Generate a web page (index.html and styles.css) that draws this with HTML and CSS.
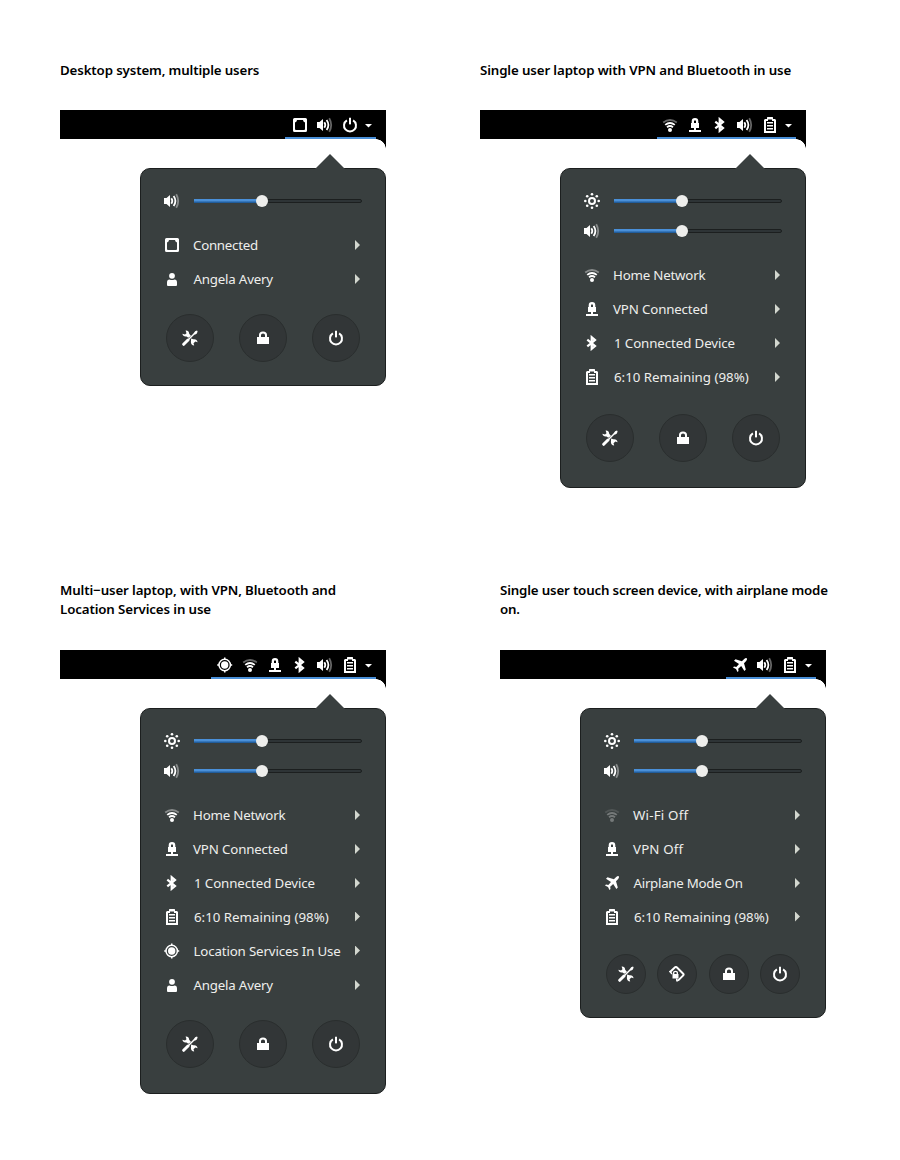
FILE: index.html
```
<!DOCTYPE html>
<html lang="en">
<head>
<meta charset="utf-8">
<title>System status menu</title>
<link rel="stylesheet" href="styles.css">
</head>
<body>
<svg class="sprite" aria-hidden="true">
  <symbol id="wired" viewBox="0 0 16 16"><path fill-rule="evenodd" d="M2.500 1h11Q15 1 15 2.500v11Q15 15 13.500 15h-11Q1 15 1 13.500v-11Q1 1 2.500 1zM3 5.500v7l1 .5h8l1-.5v-7l-1.500-1L11 3H5L4.500 4.500z"/></symbol>
  <symbol id="volume" viewBox="0 0 16 16"><path d="M0 5h2.500L6 2v12l-3.500-3H0z"/><path class="line mid" d="M7.300 5.300q2 2.700 0 5.400M9.600 3q3.600 5 0 10"/><path class="line mid dim" d="M12.200 1.300q4 6.700 0 13.400"/></symbol>
  <symbol id="power" viewBox="0 0 16 16"><path class="line thick" d="M4.900 3.400a6 6 0 1 0 6.200 0"/><path d="M7 1q1-1 2 0v6q-1 1-2 0z"/></symbol>
  <symbol id="user" viewBox="0 0 16 16"><circle cx="8" cy="4.800" r="2.900"/><path d="M3 15v-3.500Q3 8.500 5.500 8.500q2.500 1 5 0Q13 8.500 13 11.500V14q0 1-1 1H4q-1 0-1-1z"/></symbol>
  <symbol id="lock" viewBox="0 0 16 16"><path fill-rule="evenodd" d="M2 7h2V5q0-3.600 4-3.600T12 5v2h2v7H2zM6 7h4V5q0-1.600-2-1.600T6 5z"/></symbol>
  <symbol id="tools" viewBox="0 0 16 16"><path d="M.4 3.800 3 4.600 4.500 3.200 3.600.5Q6.800.2 7.200 3.800L9 6 6.300 7.700 4.500 6.400Q1 6.900.4 3.800zM9.100 8.600l2.300.7q3.500-.5 4.200 2.900l-2.200-.6-1.900 1.600.7 2.400q-3.200-.2-3.300-3.500z"/><path class="line" d="M5 11 13 3"/><path class="line thick round" d="M1.700 14.300 6 10"/><path d="m11.600 3.400 1.500-2.200L15 .5l.6.700-.7 2.200-2.100 1.400z"/></symbol>
  <symbol id="sun" viewBox="0 0 16 16"><circle class="line thick" cx="8" cy="8" r="3"/><g><circle cx="8" cy="1.300" r="1.300"/><circle cx="8" cy="14.700" r="1.300"/><circle cx="1.300" cy="8" r="1.300"/><circle cx="14.700" cy="8" r="1.300"/><circle cx="3.200" cy="3.200" r="1.300"/><circle cx="12.800" cy="3.200" r="1.300"/><circle cx="3.200" cy="12.800" r="1.300"/><circle cx="12.800" cy="12.800" r="1.300"/></g></symbol>
  <symbol id="wifi" viewBox="0 0 16 16"><circle cx="8" cy="12.900" r="2"/><path class="line mid" d="M5 10.200q3-2.400 6 0M3.200 7.900q4.800-3.900 9.600 0"/><path class="line mid dim" d="M1.200 5.400q6.800-4.800 13.600 0"/></symbol>
  <symbol id="vpn" viewBox="0 0 16 16"><path fill-rule="evenodd" d="M4 11V6h.700V4.300Q4.700 1 8 1t3.300 3.300V6h.700v5H9v2h5v2H2v-2h5v-2zM7 4v2h2V4Q8 2.600 7 4z"/></symbol>
  <symbol id="bluetooth" viewBox="0 0 16 16"><path class="line bold" d="m3.300 4.600 7.700 6.400-3.300 2.800V2.200L11 5l-7.700 6.400"/></symbol>
  <symbol id="battery" viewBox="0 0 16 16"><path fill-rule="evenodd" d="M2 3l1-1h2V.5L5.500 0h5l.5.500V2h2l1 1v13H2zM4 4v10h8V4h-2V2.500H6V4z"/><path d="M5 5h6v1.500H5zM5 8h6v1.500H5zM5 11h6v1.500H5z"/></symbol>
  <symbol id="location" viewBox="0 0 16 16"><circle class="line" cx="7.700" cy="8" r="5.700"/><circle cx="7.700" cy="8" r="3.700"/><path d="M7 .5h1.500v2H7zM7 13.500h1.500v2H7zM.2 7.300h2v1.500h-2zM13.200 7.300h2v1.500h-2z"/></symbol>
  <symbol id="airplane" viewBox="0 0 16 16"><path d="M14.800 1.200q-1-.6-2.600.8L9.900 4.200 3.500 2.300 2 3.700l5 3.200-2.700 3L2 9.500l-1 1 3 1.600L5.500 15l1-1-.3-2.300 3-2.700 3.200 5 1.400-1.500L12 6.200 14.200 4q1.300-1.800.6-2.800z"/></symbol>
  <symbol id="rotate" viewBox="0 0 16 16"><path class="line thick" d="M.8 6.200 6 1.300Q7 .6 8 1.500l6.200 6.200q.9.900 0 1.700L10 13.600q-1 1-1.900.6"/><path class="line" d="M.5 5 3 8M8 15.500 7.600 12.500"/><path fill-rule="evenodd" d="M3.500 8H4V6.500Q4 4.800 6.500 4.800T9 6.500V8h.5v4.500h-6zM5.300 8h2.400V6.700q0-.8-1.200-.8t-1.200.8z"/></symbol>
  <symbol id="caret" viewBox="0 0 9 16"><path d="M1 7h7L4.500 10.500z"/></symbol>
</svg>

<main class="board">
  <section class="case">
    <h2 class="t1">Desktop system, multiple users</h2>
    <div class="topbar"><div class="status w91"><svg><use href="#wired"/></svg><svg><use href="#volume"/></svg><svg><use href="#power"/></svg><svg class="caret"><use href="#caret"/></svg></div></div>
    <div class="menu">
      <div class="slider"><svg><use href="#volume"/></svg><div class="track"><i></i></div></div>
      <ul>
        <li><svg><use href="#wired"/></svg><span class="s-conn">Connected</span></li>
        <li><svg><use href="#user"/></svg><span class="s-user">Angela Avery</span></li>
      </ul>
      <div class="actions"><b><svg><use href="#tools"/></svg></b><b><svg><use href="#lock"/></svg></b><b><svg><use href="#power"/></svg></b></div>
    </div>
  </section>

  <section class="case">
    <h2 class="t2">Single user laptop with VPN and Bluetooth in use</h2>
    <div class="topbar"><div class="status w139"><svg><use href="#wifi"/></svg><svg><use href="#vpn"/></svg><svg><use href="#bluetooth"/></svg><svg><use href="#volume"/></svg><svg><use href="#battery"/></svg><svg class="caret"><use href="#caret"/></svg></div></div>
    <div class="menu roomy">
      <div class="slider"><svg><use href="#sun"/></svg><div class="track"><i></i></div></div>
      <div class="slider"><svg><use href="#volume"/></svg><div class="track"><i></i></div></div>
      <ul>
        <li><svg><use href="#wifi"/></svg><span class="s-home">Home Network</span></li>
        <li><svg><use href="#vpn"/></svg><span class="s-vpn">VPN Connected</span></li>
        <li><svg><use href="#bluetooth"/></svg><span class="s-dev">1 Connected Device</span></li>
        <li><svg><use href="#battery"/></svg><span class="s-bat">6:10 Remaining (98%)</span></li>
      </ul>
      <div class="actions"><b><svg><use href="#tools"/></svg></b><b><svg><use href="#lock"/></svg></b><b><svg><use href="#power"/></svg></b></div>
    </div>
  </section>

  <section class="case lower">
    <h2 class="t3">Multi−user laptop, with VPN, Bluetooth and<br>Location Services in use</h2>
    <div class="topbar"><div class="status w165"><svg><use href="#location"/></svg><svg><use href="#wifi"/></svg><svg><use href="#vpn"/></svg><svg><use href="#bluetooth"/></svg><svg><use href="#volume"/></svg><svg><use href="#battery"/></svg><svg class="caret"><use href="#caret"/></svg></div></div>
    <div class="menu full">
      <div class="slider"><svg><use href="#sun"/></svg><div class="track"><i></i></div></div>
      <div class="slider"><svg><use href="#volume"/></svg><div class="track"><i></i></div></div>
      <ul>
        <li><svg><use href="#wifi"/></svg><span class="s-home">Home Network</span></li>
        <li><svg><use href="#vpn"/></svg><span class="s-vpn">VPN Connected</span></li>
        <li><svg><use href="#bluetooth"/></svg><span class="s-dev">1 Connected Device</span></li>
        <li class="tight"><svg><use href="#battery"/></svg><span class="s-bat">6:10 Remaining (98%)</span></li>
        <li class="loose"><svg><use href="#location"/></svg><span class="s-loc">Location Services In Use</span></li>
        <li><svg><use href="#user"/></svg><span class="s-user">Angela Avery</span></li>
      </ul>
      <div class="actions"><b><svg><use href="#tools"/></svg></b><b><svg><use href="#lock"/></svg></b><b><svg><use href="#power"/></svg></b></div>
    </div>
  </section>

  <section class="case lower touch">
    <h2 class="t4">Single user touch screen device, with airplane mode<br>on.</h2>
    <div class="topbar"><div class="status w90"><svg><use href="#airplane"/></svg><svg><use href="#volume"/></svg><svg><use href="#battery"/></svg><svg class="caret"><use href="#caret"/></svg></div></div>
    <div class="menu roomy">
      <div class="slider"><svg><use href="#sun"/></svg><div class="track"><i></i></div></div>
      <div class="slider"><svg><use href="#volume"/></svg><div class="track"><i></i></div></div>
      <ul>
        <li><svg class="off"><use href="#wifi"/></svg><span class="s-wifi">Wi-Fi Off</span></li>
        <li><svg><use href="#vpn"/></svg><span class="s-voff">VPN Off</span></li>
        <li><svg><use href="#airplane"/></svg><span class="s-air">Airplane Mode On</span></li>
        <li class="tight"><svg><use href="#battery"/></svg><span class="s-bat">6:10 Remaining (98%)</span></li>
      </ul>
      <div class="actions small"><b><svg><use href="#tools"/></svg></b><b><svg><use href="#rotate"/></svg></b><b><svg><use href="#lock"/></svg></b><b><svg><use href="#power"/></svg></b></div>
    </div>
  </section>
</main>
</body>
</html>
```
FILE: styles.css
```
* { box-sizing: border-box; }
body { margin: 0; background: #fff; font-family: "Noto Sans", "Open Sans", sans-serif; font-size: 13.3px; }
.sprite { display: none; }
svg { display: block; flex: none; width: 16px; height: 16px; fill: #fff; }
.line { fill: none; stroke: #fff; stroke-width: 1.5; }
.mid { stroke-width: 1.8; }
.thick { stroke-width: 2; }
.bold { stroke-width: 2.2; }
.round { stroke-linecap: round; stroke-width: 3; }
.dim { opacity: .4; }
.off { opacity: .3; }

.board { display: grid; grid-template-columns: 420px 420px; grid-template-rows: 520px 560px; padding: 60px 0 0 60px; }
.case { width: 326px; }
.touch { margin-left: 20px; }
h2 { margin: 0; height: 50px; font-size: 13.3px; font-weight: 600; line-height: 19px; white-space: nowrap; color: #000; padding-top: 1px; }
.lower h2 { height: 70px; }
.t1 { letter-spacing: -.14px; }
.t2, .t3 { letter-spacing: -.13px; }
.t4 { letter-spacing: -.17px; }

.topbar { position: relative; height: 29px; background: #000; display: flex; justify-content: flex-end; padding-right: 10px; }
.topbar::after { content: ""; position: absolute; right: 0; top: 29px; width: 10px; height: 10px; background: radial-gradient(circle at 0 100%, transparent 9.5px, #000 10px); }
.status { display: flex; justify-content: flex-end; gap: 9px; padding: 7px 3px 0 0; border-bottom: 2px solid #4a90d9; }
.status .caret { width: 9px; margin-left: -3px; }
.w90 { width: 90px; }
.w91 { width: 91px; }
.w139 { width: 139px; }
.w165 { width: 165px; }

.menu { position: relative; width: 246px; margin: 29px 0 0 80px; padding: 17px 23px 23px; border: 1px solid #1c1f1f; border-radius: 10px; background: #393f3f; color: #eeeeec; }
.roomy, .full { padding-bottom: 25px; }
.touch .menu { padding-bottom: 23px; }
.menu::before { content: ""; position: absolute; right: 40px; top: -15px; width: 30px; height: 15px; background: #393f3f; clip-path: polygon(50% 0, 100% 100%, 0 100%); }
.slider { display: flex; align-items: center; height: 30px; gap: 14px; }
.track { position: relative; width: 168px; height: 4px; border: 1px solid #1c1f1f; border-radius: 2px; background: #2e3436; }
.track i { position: absolute; left: -1px; top: -1px; width: 68px; height: 4px; background: linear-gradient(#4a90d9 0 50%, #215d9c 75%); }
.track i::after { content: ""; position: absolute; right: -6px; top: -4px; width: 12px; height: 12px; border-radius: 50%; background: #eeeeec; }

ul { list-style: none; margin: 12px 0 18px; padding: 0; }
.roomy ul { margin-bottom: 20px; }
.touch ul { margin-bottom: 21px; }
li { display: flex; align-items: center; height: 34px; gap: 13px; white-space: nowrap; }
li::after { content: ""; flex: none; margin-left: auto; margin-right: 2px; width: 5px; height: 10px; background: #d3d7cf; clip-path: polygon(0 0, 100% 50%, 0 100%); }
.s-loc { margin: 0 -10px 0 .5px; letter-spacing: -.15px; }
.tight { height: 33px; }
.loose { height: 35px; }
.s-conn { letter-spacing: -.27px; }
.s-user { margin-left: .5px; letter-spacing: -.2px; }
.s-home { letter-spacing: -.2px; }
.s-vpn { letter-spacing: -.15px; }
.s-dev { margin-left: 1px; letter-spacing: -.1px; }
.s-bat { margin-left: 1px; }
.s-wifi { letter-spacing: .2px; }
.s-voff { letter-spacing: .15px; }
.s-air { margin-left: .5px; letter-spacing: -.27px; }

.actions { display: flex; justify-content: space-between; padding: 0 2px; }
.actions b { display: flex; align-items: center; justify-content: center; width: 48px; height: 48px; border: 1px solid #2a2e2e; border-radius: 50%; background: #323637; }
.small b { width: 40px; height: 40px; }
```
